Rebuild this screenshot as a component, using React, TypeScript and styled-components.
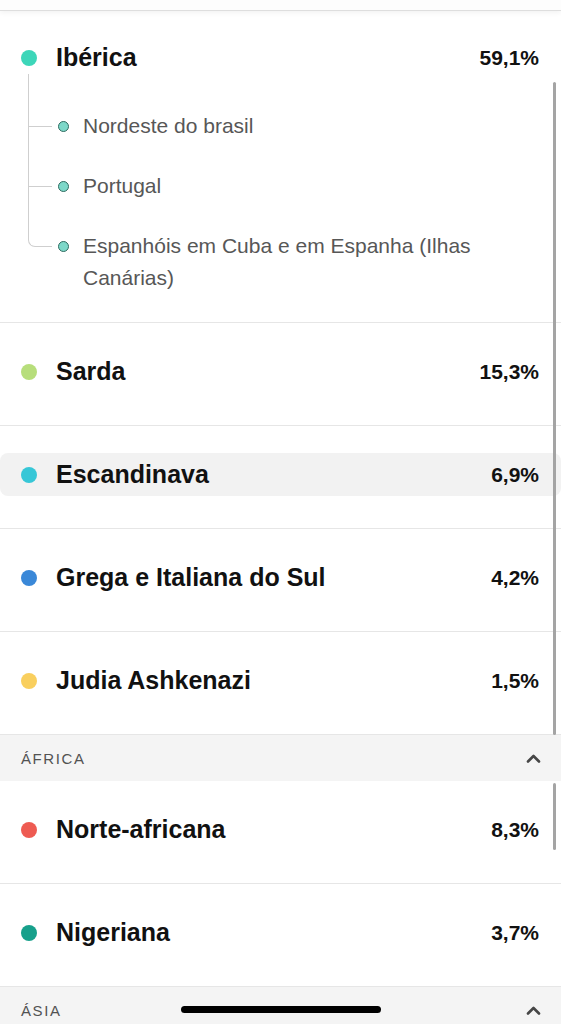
import React from 'react'
import styled, { createGlobalStyle } from 'styled-components'

interface SubRegion {
  name: string
}

interface Region {
  name: string
  value: string
  color: string
  highlighted?: boolean
  children?: SubRegion[]
}

interface Group {
  title?: string
  regions: Region[]
  indicator?: { top: number; height?: number }
}

const groups: Group[] = [
  {
    indicator: { top: 71 },
    regions: [
      {
        name: 'Ibérica',
        value: '59,1%',
        color: '#3dd6b9',
        children: [
          { name: 'Nordeste do brasil' },
          { name: 'Portugal' },
          { name: 'Espanhóis em Cuba e em Espanha (Ilhas Canárias)' },
        ],
      },
      { name: 'Sarda', value: '15,3%', color: '#b7de7b' },
      { name: 'Escandinava', value: '6,9%', color: '#37c7d7', highlighted: true },
      { name: 'Grega e Italiana do Sul', value: '4,2%', color: '#3a88d8' },
      { name: 'Judia Ashkenazi', value: '1,5%', color: '#f9cf5e' },
    ],
  },
  {
    title: 'África',
    indicator: { top: 48, height: 67 },
    regions: [
      { name: 'Norte-africana', value: '8,3%', color: '#ee5b52' },
      { name: 'Nigeriana', value: '3,7%', color: '#17a08b' },
    ],
  },
  {
    title: 'Ásia',
    regions: [],
  },
]

const GlobalStyle = createGlobalStyle`
  html, body {
    margin: 0;
    padding: 0;
    background: #ffffff;
    overflow: hidden;
  }
  body {
    font-family: "Liberation Sans", Arial, sans-serif;
    -webkit-font-smoothing: antialiased;
  }
`

const Page = styled.div`
  width: 561px;
  min-height: 1024px;
  background: #ffffff;
`

const TopBar = styled.div`
  position: relative;
  z-index: 1;
  height: 10px;
  background: #fdfdfd;
  border-bottom: 1px solid #dedede;
  box-shadow: 0 2px 5px rgba(0, 0, 0, 0.05);
`

const Section = styled.section`
  position: relative;
`

const SectionHeader = styled.div`
  display: flex;
  align-items: center;
  justify-content: space-between;
  height: 46px;
  padding: 0 20px 0 21px;
  background: #f4f4f4;
  color: #525252;
  font-size: 15px;
  letter-spacing: 1.6px;
  text-transform: uppercase;
`

const ScrollIndicator = styled.div<{ $top: number; $height?: number }>`
  position: absolute;
  right: 5px;
  top: ${(p) => p.$top}px;
  ${(p) => (p.$height ? `height: ${p.$height}px;` : 'bottom: 0;')}
  width: 3px;
  border-radius: 2px;
  background: #a4a4a4;
`

const Row = styled.div<{ $first?: boolean }>`
  padding: ${(p) => (p.$first ? '25px 0 14px' : '27px 0 32px')};
  border-bottom: 1px solid #e6e6e6;
`

const RowHead = styled.div<{ $highlighted?: boolean }>`
  display: flex;
  align-items: center;
  height: 43px;
  padding: 0 22px 0 21px;
  border-radius: 8px;
  background: ${(p) => (p.$highlighted ? '#f2f2f2' : 'transparent')};
`

const Dot = styled.span<{ $color: string }>`
  flex: none;
  width: 16px;
  height: 16px;
  border-radius: 50%;
  background: ${(p) => p.$color};
  margin-right: 19px;
`

const Name = styled.span`
  flex: 1;
  font-size: 25px;
  font-weight: 700;
  color: #111111;
`

const Value = styled.span`
  font-size: 21px;
  font-weight: 700;
  color: #111111;
`

const SubList = styled.div`
  position: relative;
  margin: -5px 0 0 28px;
  padding: 22px 22px 0 30px;

  &::before {
    content: '';
    position: absolute;
    left: 0;
    top: 0;
    height: 22px;
    border-left: 1.5px solid #cfcfcf;
  }
`

const SubItem = styled.div`
  position: relative;
  display: flex;
  align-items: flex-start;
  padding: 14px 0;

  &::before {
    content: '';
    position: absolute;
    left: -30px;
    top: 0;
    bottom: 0;
    border-left: 1.5px solid #cfcfcf;
  }

  &::after {
    content: '';
    position: absolute;
    left: -30px;
    top: 30px;
    width: 24px;
    border-top: 1.5px solid #cfcfcf;
  }

  &:last-child::before {
    bottom: auto;
    height: 30px;
    width: 7px;
    border-bottom: 1.5px solid #cfcfcf;
    border-bottom-left-radius: 7px;
  }

  &:last-child::after {
    left: -23px;
    width: 17px;
  }
`

const SubDot = styled.span<{ $color: string }>`
  flex: none;
  box-sizing: border-box;
  width: 11px;
  height: 11px;
  margin: 11px 14px 0 0;
  border-radius: 50%;
  border: 1.5px solid #2f6c61;
  background: ${(p) => p.$color};
`

const SubName = styled.span`
  font-size: 21px;
  line-height: 32px;
  color: #575757;
`

const Chevron = styled.svg`
  width: 15px;
  height: 9px;
  color: #464646;
`

const HomeIndicator = styled.div`
  position: fixed;
  left: 50%;
  bottom: 11px;
  width: 200px;
  height: 7px;
  margin-left: -100px;
  border-radius: 4px;
  background: #000000;
`

const lighten = (color: string) => (color === '#3dd6b9' ? '#7dd8c9' : color)

const RegionRow = ({ region, first }: { region: Region; first?: boolean }) => (
  <Row $first={first}>
    <RowHead $highlighted={region.highlighted}>
      <Dot $color={region.color} />
      <Name>{region.name}</Name>
      <Value>{region.value}</Value>
    </RowHead>
    {region.children && (
      <SubList>
        {region.children.map((child) => (
          <SubItem key={child.name}>
            <SubDot $color={lighten(region.color)} />
            <SubName>{child.name}</SubName>
          </SubItem>
        ))}
      </SubList>
    )}
  </Row>
)

const App = (): JSX.Element => {
  return (
    <Page>
      <GlobalStyle />
      <TopBar />
      {groups.map((group, gi) => (
        <Section key={gi}>
          {group.title && (
            <SectionHeader>
              {group.title}
              <Chevron viewBox="0 0 15 9" fill="none">
                <polyline
                  points="2,7.5 7.5,2 13,7.5"
                  stroke="currentColor"
                  strokeWidth="2.6"
                  strokeLinecap="round"
                  strokeLinejoin="round"
                />
              </Chevron>
            </SectionHeader>
          )}
          {group.regions.map((region, ri) => (
            <RegionRow key={region.name} region={region} first={gi === 0 && ri === 0} />
          ))}
          {group.indicator && (
            <ScrollIndicator $top={group.indicator.top} $height={group.indicator.height} />
          )}
        </Section>
      ))}
      <HomeIndicator />
    </Page>
  )
}

export default App
